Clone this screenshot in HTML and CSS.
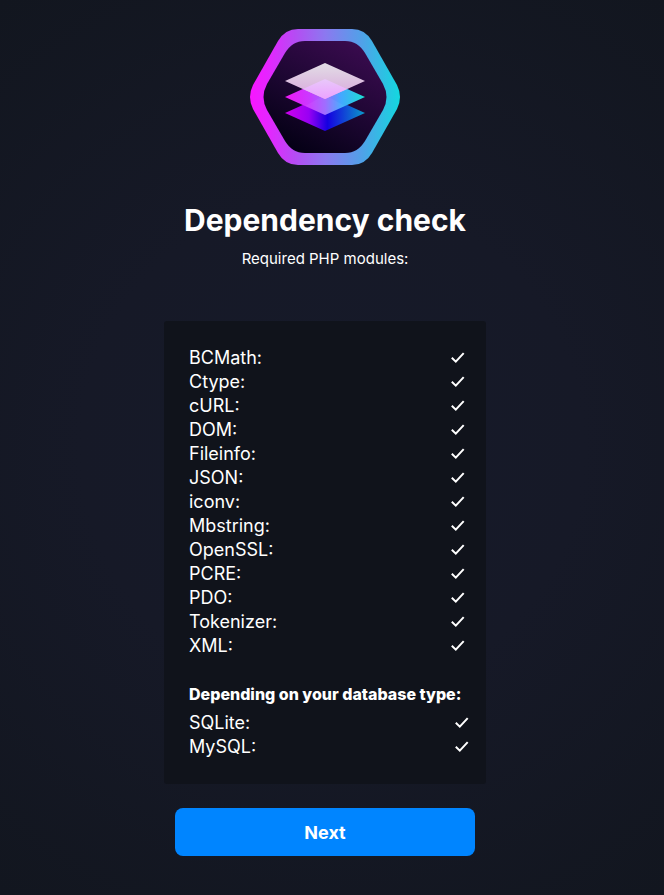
FILE: index.html
```html
<!DOCTYPE html>
<html lang="en">
<head>
<meta charset="utf-8">
<meta name="viewport" content="width=device-width, initial-scale=1">
<title>Dependency check</title>
<link rel="stylesheet" href="styles.css">
</head>
<body>
<svg width="0" height="0" class="symbols" aria-hidden="true">
  <symbol id="check" viewBox="0 0 14 14"><path d="M.8 6.7 4.8 10.6 12.7 2.1" fill="none" stroke="currentColor" stroke-width="2"/></symbol>
</svg>
<main class="setup">
  <svg class="logo" viewBox="0 0 150 136" role="img" aria-label="Logo">
    <defs>
      <linearGradient id="ring"><stop offset="0" stop-color="#f816ff"/><stop offset=".12" stop-color="#e525ff"/><stop offset=".3" stop-color="#b54cf3"/><stop offset=".5" stop-color="#8c78f0"/><stop offset=".75" stop-color="#4fa2e8"/><stop offset="1" stop-color="#13d8df"/></linearGradient>
      <linearGradient id="core" x1=".8" y1="0" x2=".2" y2="1"><stop offset="0" stop-color="#3b0b50"/><stop offset=".55" stop-color="#1b0630"/><stop offset="1" stop-color="#020012"/></linearGradient>
      <linearGradient id="low"><stop offset="0" stop-color="#d000ee"/><stop offset=".3" stop-color="#9800f4"/><stop offset=".53" stop-color="#1500e0"/><stop offset="1" stop-color="#0b9bca"/></linearGradient>
      <linearGradient id="mid"><stop offset="0" stop-color="#ee16f5"/><stop offset=".3" stop-color="#cb38ff"/><stop offset=".5" stop-color="#9c65ff"/><stop offset=".7" stop-color="#43a8ff"/><stop offset="1" stop-color="#1be0d2"/></linearGradient>
      <linearGradient id="high" x1="0" y1="0" x2="0" y2="1"><stop offset="0" stop-color="#e2dde5"/><stop offset="1" stop-color="#d8a5dc"/></linearGradient>
      <linearGradient id="shine" x1="0" y1="0" x2="0" y2="1"><stop offset="0" stop-color="#e8c8fa"/><stop offset="1" stop-color="#eca2ff"/></linearGradient>
    </defs>
    <path fill="url(#ring)" d="M48 0H102Q115 0 122 12L147 56Q153 68 147 80L122 124Q115 136 102 136H48Q35 136 28 124L3 80Q-3 68 3 56L28 12Q35 0 48 0Z"/>
    <path fill="url(#core)" d="M55 12H95C104 12 110 16 115 24L133 55Q140 68 133 81L115 112C110 120 104 124 95 124H55C46 124 40 120 35 112L17 81Q10 68 17 55L35 24C40 16 46 12 55 12Z"/>
    <path fill="url(#low)" d="M35 84 75 66 115 84 75 102Z"/>
    <path fill="url(#mid)" d="M35 68 75 50 115 68 75 86Z"/>
    <path fill="#fff" fill-opacity=".05" d="M75 66 95 77 75 86 55 77Z"/>
    <path fill="url(#high)" d="M35 52 75 34 115 52 75 70Z"/>
    <path fill="url(#shine)" d="M75 50 97 60 75 70 53 60Z"/>
  </svg>
  <h1 class="title">Dependency check</h1>
  <p class="subtitle">Required PHP modules:</p>
  <section class="panel">
    <table class="modules">
      <tr><th scope="row">BCMath:</th><td><svg class="tick" role="img" aria-label="Installed"><use href="#check"/></svg></td></tr>
      <tr><th scope="row">Ctype:</th><td><svg class="tick" role="img" aria-label="Installed"><use href="#check"/></svg></td></tr>
      <tr><th scope="row">cURL:</th><td><svg class="tick" role="img" aria-label="Installed"><use href="#check"/></svg></td></tr>
      <tr><th scope="row">DOM:</th><td><svg class="tick" role="img" aria-label="Installed"><use href="#check"/></svg></td></tr>
      <tr><th scope="row">Fileinfo:</th><td><svg class="tick" role="img" aria-label="Installed"><use href="#check"/></svg></td></tr>
      <tr><th scope="row">JSON:</th><td><svg class="tick" role="img" aria-label="Installed"><use href="#check"/></svg></td></tr>
      <tr><th scope="row">iconv:</th><td><svg class="tick" role="img" aria-label="Installed"><use href="#check"/></svg></td></tr>
      <tr><th scope="row">Mbstring:</th><td><svg class="tick" role="img" aria-label="Installed"><use href="#check"/></svg></td></tr>
      <tr><th scope="row">OpenSSL:</th><td><svg class="tick" role="img" aria-label="Installed"><use href="#check"/></svg></td></tr>
      <tr><th scope="row">PCRE:</th><td><svg class="tick" role="img" aria-label="Installed"><use href="#check"/></svg></td></tr>
      <tr><th scope="row">PDO:</th><td><svg class="tick" role="img" aria-label="Installed"><use href="#check"/></svg></td></tr>
      <tr><th scope="row">Tokenizer:</th><td><svg class="tick" role="img" aria-label="Installed"><use href="#check"/></svg></td></tr>
      <tr><th scope="row">XML:</th><td><svg class="tick" role="img" aria-label="Installed"><use href="#check"/></svg></td></tr>
    </table>
    <h2 class="group">Depending on your database type:</h2>
    <table class="modules modules-wide">
      <tr><th scope="row">SQLite:</th><td><svg class="tick" role="img" aria-label="Installed"><use href="#check"/></svg></td></tr>
      <tr><th scope="row">MySQL:</th><td><svg class="tick" role="img" aria-label="Installed"><use href="#check"/></svg></td></tr>
    </table>
  </section>
  <button class="next" type="button">Next</button>
</main>
</body>
</html>
```
FILE: styles.css
```css
* { box-sizing: border-box; }
body {
  margin: 0;
  min-height: 100vh;
  padding-right: 14px;
  background: radial-gradient(circle, #161a2a 0%, #161927 45%, #12161f 100%);
  color: #fff;
  font-family: Inter, sans-serif;
}
.symbols { position: absolute; }
.setup {
  display: flex;
  flex-direction: column;
  align-items: center;
  padding: 29px 16px 32px;
}
.logo { width: 150px; height: 136px; }
.title {
  margin: 35px 0 0;
  font-size: 30px;
  line-height: 40px;
  font-weight: 700;
}
.subtitle {
  margin: 7px 0 0;
  font-size: 15px;
  line-height: 24px;
}
.panel {
  width: 100%;
  max-width: 322px;
  margin: 50px 0 24px;
  padding: 25px 17px 25px 25px;
  border-radius: 3px;
  background: #10131b;
}
.modules {
  width: calc(100% - 4px);
  border-collapse: collapse;
  font-size: 18px;
  line-height: 24px;
}
.modules-wide { width: 100%; }
.modules th, .modules td {
  height: 24px;
  padding: 0;
  font-weight: 400;
  text-align: left;
}
.modules td { text-align: right; }
.tick {
  display: block;
  width: 14px;
  height: 14px;
  margin-left: auto;
}
.group {
  margin: 24px 0 4px;
  font-size: 16px;
  line-height: 25px;
  font-weight: 800;
  white-space: nowrap;
}
.next {
  width: 100%;
  max-width: 300px;
  height: 48px;
  padding: 2px 0 0;
  border: 0;
  border-radius: 8px;
  background: #0085ff;
  color: #fff;
  font: 700 18px/24px Inter, sans-serif;
  cursor: pointer;
}
```
